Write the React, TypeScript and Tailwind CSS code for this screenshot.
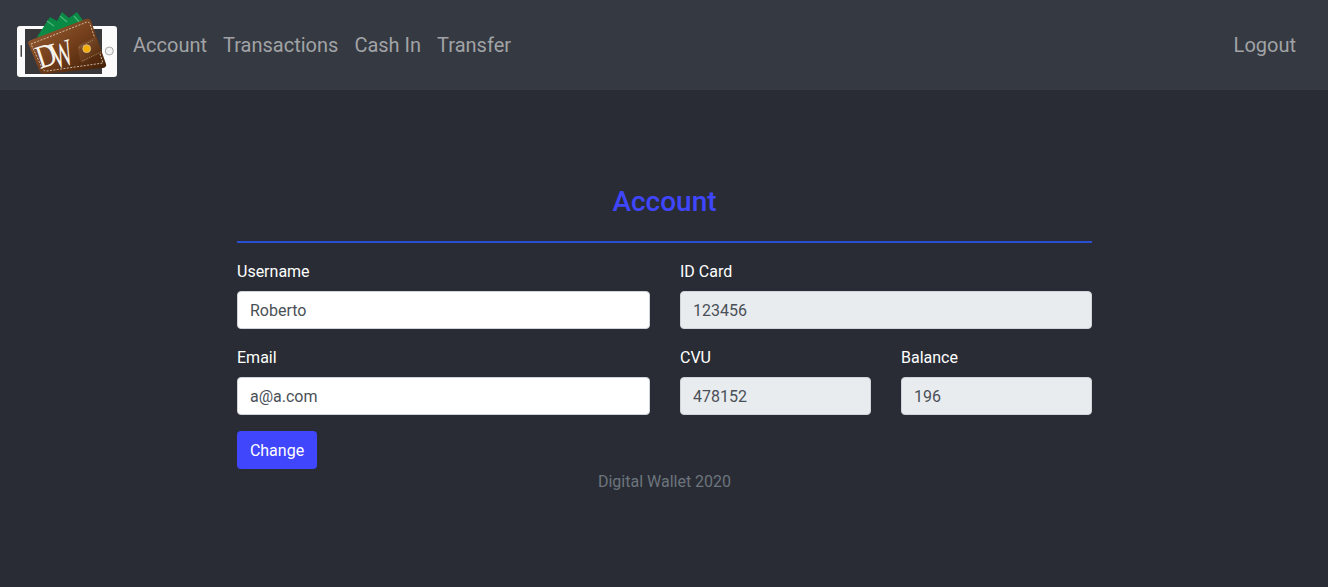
export default function App() {
  const Field = ({ label, value, disabled }: { label: string; value: string; disabled?: boolean }) => (
    <div className="flex flex-col">
      <label className="mb-[7px] h-6 leading-6 text-white">{label}</label>
      <input
        readOnly
        value={value}
        className={`h-[38px] w-full rounded border border-[#ced4da] px-3 text-[#495057] outline-none ${disabled ? "bg-[#e9ecef]" : "bg-white"}`}
      />
    </div>
  );
  const Logo = () => (
    <svg width="104" height="70" viewBox="15 8 104 70" className="block overflow-visible">
      <defs>
        <linearGradient id="wallet" x1="0" y1="0" x2="1" y2="1">
          <stop offset="0" stopColor="#9c6238" />
          <stop offset="0.5" stopColor="#743f1b" />
          <stop offset="1" stopColor="#3d1c06" />
        </linearGradient>
        <linearGradient id="clasp" x1="0" y1="0" x2="1" y2="1">
          <stop offset="0" stopColor="#8a5530" />
          <stop offset="1" stopColor="#4a2509" />
        </linearGradient>
      </defs>
      <rect x="17" y="26" width="100" height="51" rx="3" fill="#fbfbfb" />
      <rect x="25" y="29" width="77" height="45" fill="#38383a" />
      <rect x="20.5" y="45" width="1.5" height="12" rx="0.7" fill="#444" />
      <circle cx="109.3" cy="51" r="4" fill="#f2f2f2" stroke="#a8a8a8" />
      <path d="M37 37 L50 17 L57 21 L62 12 L69 18 L77 12 L84 22 L60 40 Z" fill="#0a8a45" />
      <path d="M47 21 L54 26 M60 16 L67 22 M74 16 L80 23" stroke="#48b878" strokeWidth="1.2" />
      <path d="M28 43 Q28 41 31 40 L86 19 Q90 18 91 21 L106 64 Q107 67 103 68 L44 74 Q41 74 40 72 Z" fill="url(#wallet)" />
      <path d="M31 44 L87 22 Q89 22 90 24 L103 63 L47 71 Q43 71 42 68 Z" fill="none" stroke="#e6d6c0" strokeWidth="0.8" strokeDasharray="2 1.4" />
      <g fill="#f7f3ec" fontFamily="'Liberation Serif', serif">
        <text x="0" y="0" fontSize="33" transform="translate(40 69) rotate(-18) scale(0.82 1)">D</text>
        <text x="0" y="0" fontSize="38" transform="translate(55 69) rotate(-16) scale(0.6 1)">W</text>
      </g>
      <path d="M78 48 Q78 45 81 44 L93 38 Q96 37 97 40 L102 52 L84 62 Q81 63 80 60 Z" fill="url(#clasp)" />
      <path d="M79 48 L93 40 M82 61 L101 52" stroke="#c9b090" strokeWidth="0.5" strokeDasharray="1.5 1" />
      <circle cx="86.7" cy="48.7" r="3.9" fill="#f5ad00" stroke="#d9c39a" strokeWidth="0.8" />
    </svg>
  );
  return (
    <div className="min-h-[587px] bg-[#292c34] font-['Roboto',sans-serif] text-base">
      <nav className="flex h-[90px] items-center justify-between bg-[#353941] pl-[15px] pr-6 text-[20px] text-[#a1a3a6]">
        <div className="flex items-center">
          <div className="mr-[6px] -mt-[4px]">
            <Logo />
          </div>
          <a className="px-2">Account</a>
          <a className="px-2">Transactions</a>
          <a className="px-2">Cash In</a>
          <a className="px-2">Transfer</a>
        </div>
        <a className="px-2">Logout</a>
      </nav>
      <main className="ml-[237px] w-[855px] pt-[93px]">
        <h1 className="mb-5 h-[38px] text-center text-[28px] font-medium leading-[38px] text-[#3f46fb]">Account</h1>
        <div className="mb-[17px] h-[2px] bg-[#2a4fd0]" />
        <div className="grid grid-cols-[413px_412px] gap-x-[30px] gap-y-[17px]">
          <Field label="Username" value="Roberto" />
          <Field label="ID Card" value="123456" disabled />
          <Field label="Email" value="a@a.com" />
          <div className="grid grid-cols-2 gap-x-[30px]">
            <Field label="CVU" value="478152" disabled />
            <Field label="Balance" value="196" disabled />
          </div>
        </div>
        <button className="mt-4 block h-[38px] w-20 rounded bg-[#3f46fb] pt-px text-white">Change</button>
        <p className="mt-px text-center leading-6 text-[#6c757d]">Digital Wallet 2020</p>
      </main>
    </div>
  );
}
